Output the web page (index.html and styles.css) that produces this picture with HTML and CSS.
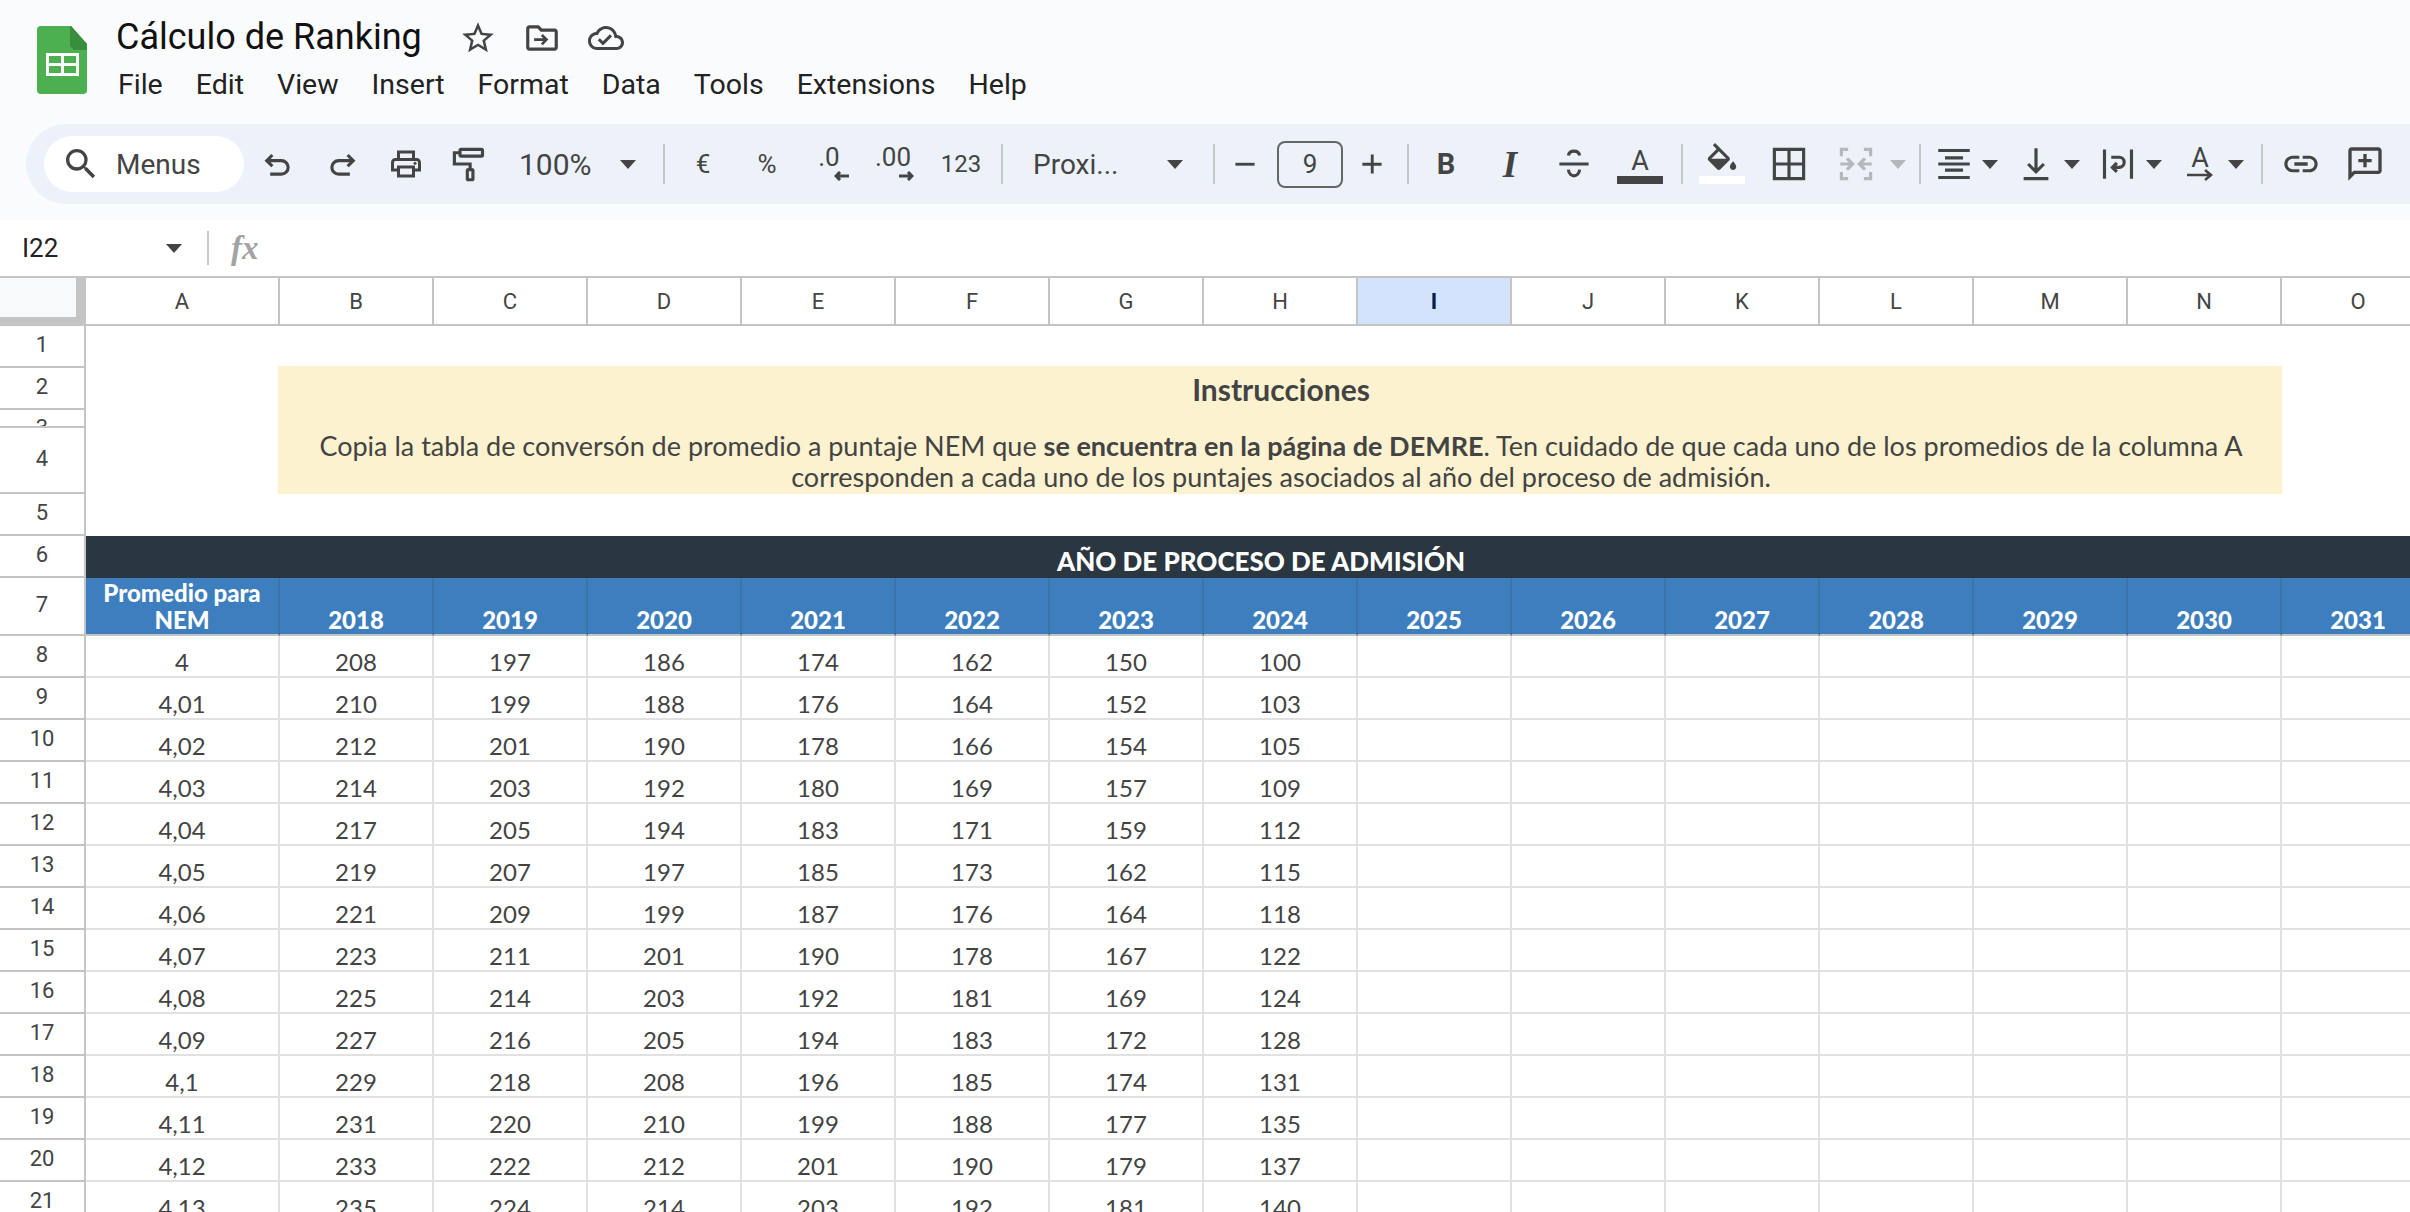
FILE: index.html
```html
<!DOCTYPE html>
<html lang="es">
<head>
  <meta charset="UTF-8">
  <title>Cálculo de Ranking</title>
  <link rel="stylesheet" href="styles.css">
</head>
<body>
  <div class="top">
    <div class="head">
      <svg class="logo" viewBox="0 0 50 68">
        <path fill="#4caf50" d="M4 0h30l16 18v46a4 4 0 0 1-4 4H4a4 4 0 0 1-4-4V4a4 4 0 0 1 4-4z"/>
        <path fill="#388e3c" d="M33 0h1l16 18v6H37l-4-4z"/>
        <path fill="#fff" fill-rule="evenodd" d="M9 27h33v23H9zm3 3v7h12v-7zm15 0v7h12v-7zm-15 10v7h12v-7zm15 0v7h12v-7z"/>
      </svg>
      <div class="head-text">
        <div class="title-row">
          <span class="doc-title">Cálculo de Ranking</span>
          <svg class="star-icon" viewBox="0 0 24 24"><path d="M22 9.24l-7.19-.62L12 2 9.19 8.63 2 9.24l5.46 4.73L5.82 21 12 17.27 18.18 21l-1.63-7.03L22 9.24zM12 15.4l-3.76 2.27 1-4.28-3.32-2.88 4.38-.38L12 6.1l1.71 4.04 4.38.38-3.32 2.88 1 4.28L12 15.4z"/></svg>
          <svg class="folder-icon" viewBox="0 0 24 24"><path d="M20 6h-8l-2-2H4c-1.1 0-2 .9-2 2v12c0 1.1.9 2 2 2h16c1.1 0 2-.9 2-2V8c0-1.1-.9-2-2-2zm0 12H4V6h5.17l2 2H20v10zM12.5 9.5l-1.2 1.2 1.5 1.5H7v1.7h5.8l-1.5 1.5 1.2 1.2L16 13z"/></svg>
          <svg class="cloud-icon" viewBox="0 0 24 24"><path d="M19.35 10.04C18.67 6.59 15.64 4 12 4 9.11 4 6.6 5.64 5.35 8.04 2.34 8.36 0 10.91 0 14c0 3.31 2.69 6 6 6h13c2.76 0 5-2.24 5-5 0-2.64-2.05-4.78-4.65-4.96zM19 18H6c-2.21 0-4-1.79-4-4 0-2.05 1.53-3.76 3.56-3.97l1.07-.11.5-.95C8.08 7.14 9.94 6 12 6c2.62 0 4.88 1.86 5.39 4.43l.3 1.5 1.53.11c1.56.1 2.78 1.41 2.78 2.96 0 1.65-1.35 3-3 3zm-9-3.82-2.09-2.09L6.5 13.5 10 17l6.01-6.01-1.41-1.41z"/></svg>
        </div>
        <div class="menu">
          <span>File</span><span>Edit</span><span>View</span><span>Insert</span><span>Format</span><span>Data</span><span>Tools</span><span>Extensions</span><span>Help</span>
        </div>
      </div>
    </div>

    <div class="toolbar">
      <div class="search-pill">
        <svg class="search-icon" viewBox="0 0 24 24"><path d="M15.5 14h-.79l-.28-.27A6.471 6.471 0 0 0 16 9.5 6.5 6.5 0 1 0 9.5 16c1.61 0 3.09-.59 4.23-1.57l.27.28v.79l5 4.99L20.49 19l-4.99-5zm-6 0C7.01 14 5 11.99 5 9.5S7.01 5 9.5 5 14 7.01 14 9.5 11.99 14 9.5 14z"/></svg>
        <span>Menus</span>
      </div>
      <div class="btn"><svg class="ico line" viewBox="0 0 32 32"><path d="M11 8 6 13l5 5M6 13h13a6 6 0 0 1 0 12H9"/></svg></div>
      <div class="btn"><svg class="ico line" viewBox="0 0 32 32"><path d="m21 8 5 5-5 5M26 13H13a6 6 0 0 0 0 12h10"/></svg></div>
      <div class="btn"><svg class="ico" viewBox="0 0 24 24"><path d="M19 8h-1V3H6v5H5c-1.66 0-3 1.34-3 3v6h4v4h12v-4h4v-6c0-1.66-1.34-3-3-3zM8 5h8v3H8V5zm8 14H8v-4h8v4zm2-4v-2H6v2H4v-4c0-.55.45-1 1-1h14c.55 0 1 .45 1 1v4h-2z"/><circle cx="18" cy="11.5" r="1"/></svg></div>
      <div class="btn btn-paint"><svg class="ico line" viewBox="0 0 32 32"><rect x="8" y="3" width="20" height="6" rx="1"/><path d="M8 6H3v10h14v5"/><rect x="14.500" y="21" width="5" height="9" rx="1"/></svg></div>
      <div class="zoom-select"><span>100%</span><i class="tri"></i></div>
      <div class="sep sep-a"></div>
      <div class="btn txt">€</div>
      <div class="btn txt">%</div>
      <div class="btn dec">
        <span class="dec-label">.0</span>
        <svg class="dec-arrow" viewBox="0 0 16 10"><path d="M15 5H3M6 1 2 5l4 4"/></svg>
      </div>
      <div class="btn dec">
        <span class="dec-label">.00</span>
        <svg class="dec-arrow" viewBox="0 0 16 10"><path d="M1 5h12M10 1l4 4-4 4"/></svg>
      </div>
      <div class="btn txt fmt-123">123</div>
      <div class="sep sep-b"></div>
      <div class="font-select"><span>Proxi...</span><i class="tri"></i></div>
      <div class="sep sep-c"></div>
      <div class="btn btn-minus"><svg class="ico-sm" viewBox="0 0 20 20"><path d="M2 9h16v2.400H2z"/></svg></div>
      <div class="size-box">9</div>
      <div class="btn btn-plus"><svg class="ico-sm" viewBox="0 0 20 20"><path d="M9 2h2.400v7H18v2.400h-6.600V18H9v-6.600H2V9h7z"/></svg></div>
      <div class="sep sep-d"></div>
      <div class="btn txt fmt-b">B</div>
      <div class="btn txt fmt-i">I</div>
      <div class="btn"><svg class="ico line" viewBox="0 0 32 32"><path d="M11 8.500c.5-3 3-4 5-4s4.500 1 5 4M3 16h26M11 21c.5 4 3 5.500 5 5.500s4.500-1.500 5-5.500"/></svg></div>
      <div class="btn color-btn btn-color">
        <span class="color-a">A</span>
        <span class="color-bar"></span>
      </div>
      <div class="sep sep-e"></div>
      <div class="btn color-btn">
        <svg class="fill-icon" viewBox="0 0 24 24"><path d="M16.560 8.940 7.620 0 6.210 1.410l2.380 2.380-5.150 5.150c-.59.59-.59 1.540 0 2.120l5.500 5.500c.29.29.68.44 1.060.44s.77-.15 1.060-.44l5.500-5.500c.59-.58.59-1.530 0-2.120zM5.210 10 10 5.210 14.790 10H5.210zM19 11.500s-2 2.170-2 3.500c0 1.100.9 2 2 2s2-.9 2-2c0-1.330-2-3.500-2-3.500z"/></svg>
        <span class="fill-bar"></span>
      </div>
      <div class="btn btn-borders"><svg class="ico line" viewBox="0 0 32 32"><path d="M3 3h26v26H3zM16 3v26M3 16h26"/></svg></div>
      <div class="btn btn-merge"><svg class="ico line muted" viewBox="0 0 32 32"><path d="M9 3H3v6M23 3h6v6M9 29H3v-6M23 29h6v-6M2 16h10M8 11l5 5-5 5M30 16H20M24 11l-5 5 5 5"/></svg></div>
      <i class="tri tri-merge"></i>
      <div class="sep sep-f"></div>
      <div class="split"><svg class="ico line" viewBox="0 0 32 32"><path d="M2 4h28M8 10.500h16M2 16h28M8 21.500h16M2 28h28"/></svg><i class="tri"></i></div>
      <div class="split"><svg class="ico line" viewBox="0 0 32 32"><path d="M5 29h22M16 2v21M9 16l7 7 7-7"/></svg><i class="tri"></i></div>
      <div class="split"><svg class="ico line" viewBox="0 0 32 32"><path d="M4 3v26M28 3v26M10 10h7a4 4 0 0 1 0 9h-5M15 15l-4 4 4 4"/></svg><i class="tri"></i></div>
      <div class="split">
        <div class="rotate-btn">
          <span class="rotate-a">A</span>
          <svg class="rotate-arrow" viewBox="0 0 26 12"><path d="M0 6h23M18 1l6 5-6 5"/></svg>
        </div>
        <i class="tri"></i>
      </div>
      <div class="sep sep-g"></div>
      <div class="btn"><svg class="ico ico-link" viewBox="0 0 24 24"><path d="M3.900 12c0-1.710 1.390-3.100 3.100-3.100h4V7H7c-2.760 0-5 2.240-5 5s2.240 5 5 5h4v-1.900H7c-1.710 0-3.100-1.390-3.100-3.100zM8 13h8v-2H8v2zm9-6h-4v1.900h4c1.710 0 3.100 1.390 3.100 3.100s-1.390 3.100-3.100 3.100h-4V17h4c2.760 0 5-2.240 5-5s-2.240-5-5-5z"/></svg></div>
      <div class="btn"><svg class="ico ico-link" viewBox="0 0 24 24"><path d="M20 2H4c-1.100 0-2 .9-2 2v18l4-4h14c1.100 0 2-.9 2-2V4c0-1.100-.9-2-2-2zm0 14H5.170L4 17.170V4h16v12z"/><path d="M11 6h2v3h3v2h-3v3h-2v-3H8V9h3z"/></svg></div>
    </div>
  </div>

  <div class="formula-bar">
    <div class="name-box"><span>I22</span><i class="tri"></i></div>
    <div class="fx-sep"></div>
    <span class="fx">fx</span>
  </div>

  <div class="sheet">
    <table class="grid">
      <colgroup>
        <col class="col-rh"><col class="col-a">
        <col><col><col><col><col><col><col><col><col><col><col><col><col><col>
      </colgroup>
      <tr class="col-head">
        <th class="corner"></th>
        <th>A</th><th>B</th><th>C</th><th>D</th><th>E</th><th>F</th><th>G</th><th>H</th>
        <th class="active">I</th>
        <th>J</th><th>K</th><th>L</th><th>M</th><th>N</th><th>O</th>
      </tr>
      <tr class="blank"><td class="rh">1</td><td colspan="15"></td></tr>
      <tr class="blank">
        <td class="rh">2</td><td rowspan="4"></td>
        <td class="note" colspan="13" rowspan="3">
          <div class="note-title">Instrucciones</div>
          <div class="note-body">Copia la tabla de conversón de promedio a puntaje NEM que <b>se encuentra en la página de DEMRE</b>. Ten cuidado de que cada uno de los promedios de la columna A corresponden a cada uno de los puntajes asociados al año del proceso de admisión.</div>
        </td>
        <td rowspan="4"></td>
      </tr>
      <tr class="short"><td class="rh"><div class="clip">3</div></td></tr>
      <tr class="tall"><td class="rh">4</td></tr>
      <tr class="blank"><td class="rh">5</td><td colspan="13"></td></tr>
      <tr class="blank"><td class="rh">6</td><td class="band" colspan="15">AÑO DE PROCESO DE ADMISIÓN</td></tr>
      <tr class="years">
        <td class="rh">7</td>
        <td>Promedio para NEM</td>
        <td>2018</td><td>2019</td><td>2020</td><td>2021</td><td>2022</td><td>2023</td><td>2024</td>
        <td>2025</td><td>2026</td><td>2027</td><td>2028</td><td>2029</td><td>2030</td><td>2031</td>
      </tr>
      <tr class="data"><td class="rh">8</td><td>4</td><td>208</td><td>197</td><td>186</td><td>174</td><td>162</td><td>150</td><td>100</td><td></td><td></td><td></td><td></td><td></td><td></td><td></td></tr>
      <tr class="data"><td class="rh">9</td><td>4,01</td><td>210</td><td>199</td><td>188</td><td>176</td><td>164</td><td>152</td><td>103</td><td></td><td></td><td></td><td></td><td></td><td></td><td></td></tr>
      <tr class="data"><td class="rh">10</td><td>4,02</td><td>212</td><td>201</td><td>190</td><td>178</td><td>166</td><td>154</td><td>105</td><td></td><td></td><td></td><td></td><td></td><td></td><td></td></tr>
      <tr class="data"><td class="rh">11</td><td>4,03</td><td>214</td><td>203</td><td>192</td><td>180</td><td>169</td><td>157</td><td>109</td><td></td><td></td><td></td><td></td><td></td><td></td><td></td></tr>
      <tr class="data"><td class="rh">12</td><td>4,04</td><td>217</td><td>205</td><td>194</td><td>183</td><td>171</td><td>159</td><td>112</td><td></td><td></td><td></td><td></td><td></td><td></td><td></td></tr>
      <tr class="data"><td class="rh">13</td><td>4,05</td><td>219</td><td>207</td><td>197</td><td>185</td><td>173</td><td>162</td><td>115</td><td></td><td></td><td></td><td></td><td></td><td></td><td></td></tr>
      <tr class="data"><td class="rh">14</td><td>4,06</td><td>221</td><td>209</td><td>199</td><td>187</td><td>176</td><td>164</td><td>118</td><td></td><td></td><td></td><td></td><td></td><td></td><td></td></tr>
      <tr class="data"><td class="rh">15</td><td>4,07</td><td>223</td><td>211</td><td>201</td><td>190</td><td>178</td><td>167</td><td>122</td><td></td><td></td><td></td><td></td><td></td><td></td><td></td></tr>
      <tr class="data"><td class="rh">16</td><td>4,08</td><td>225</td><td>214</td><td>203</td><td>192</td><td>181</td><td>169</td><td>124</td><td></td><td></td><td></td><td></td><td></td><td></td><td></td></tr>
      <tr class="data"><td class="rh">17</td><td>4,09</td><td>227</td><td>216</td><td>205</td><td>194</td><td>183</td><td>172</td><td>128</td><td></td><td></td><td></td><td></td><td></td><td></td><td></td></tr>
      <tr class="data"><td class="rh">18</td><td>4,1</td><td>229</td><td>218</td><td>208</td><td>196</td><td>185</td><td>174</td><td>131</td><td></td><td></td><td></td><td></td><td></td><td></td><td></td></tr>
      <tr class="data"><td class="rh">19</td><td>4,11</td><td>231</td><td>220</td><td>210</td><td>199</td><td>188</td><td>177</td><td>135</td><td></td><td></td><td></td><td></td><td></td><td></td><td></td></tr>
      <tr class="data"><td class="rh">20</td><td>4,12</td><td>233</td><td>222</td><td>212</td><td>201</td><td>190</td><td>179</td><td>137</td><td></td><td></td><td></td><td></td><td></td><td></td><td></td></tr>
      <tr class="data"><td class="rh">21</td><td>4,13</td><td>235</td><td>224</td><td>214</td><td>203</td><td>192</td><td>181</td><td>140</td><td></td><td></td><td></td><td></td><td></td><td></td><td></td></tr>
    </table>
  </div>
</body>
</html>
```

FILE: styles.css
```css
* {
  box-sizing: border-box;
  margin: 0;
  padding: 0;
}
html, body {
  height: 1212px;
  overflow: hidden;
}
body {
  font-family: Roboto, Arial, sans-serif;
  background-color: #fff;
  color: #444;
}

/* top area */
.top {
  height: 220px;
  background-color: #f9fbfd;
  padding-top: 16px;
}
.head {
  display: flex;
  height: 108px;
  padding-left: 37px;
}
.logo {
  width: 50px;
  height: 68px;
  margin-top: 10px;
}
.head-text {
  margin-left: 29px;
}
.title-row {
  display: flex;
  align-items: center;
  height: 40px;
}
.doc-title {
  font-size: 36px;
  color: #111;
  width: 306px;
  padding-top: 2px;
  white-space: nowrap;
}
.title-row svg {
  fill: #444;
  flex: none;
  margin-top: 4px;
}
.star-icon {
  width: 38px;
  height: 38px;
  margin-left: 37px;
}
.folder-icon {
  width: 38px;
  height: 38px;
  margin-left: 26px;
}
.cloud-icon {
  width: 36px;
  height: 36px;
  margin-left: 27px;
}
.menu {
  display: flex;
  gap: 33px;
  margin-top: 9px;
  padding-left: 2px;
  font-size: 28.5px;
  line-height: 40px;
  color: #222;
}

/* toolbar */
.toolbar {
  display: flex;
  align-items: center;
  height: 80px;
  margin-left: 26px;
  padding-left: 18px;
  background-color: #edf2fa;
  border-radius: 40px 0 0 40px;
}
.search-pill {
  display: flex;
  align-items: center;
  width: 200px;
  height: 56px;
  margin-right: 2px;
  padding-left: 17px;
  background-color: #fff;
  border-radius: 28px;
  font-size: 28px;
  color: #444;
}
.search-icon {
  width: 40px;
  height: 40px;
  fill: #444;
  margin-right: 15px;
}
.btn {
  flex: none;
  display: flex;
  align-items: center;
  justify-content: center;
  width: 64px;
  height: 56px;
}
.ico {
  width: 36px;
  height: 36px;
  fill: #444;
}
.ico.ico-link {
  width: 40px;
  height: 40px;
}
.ico.line {
  fill: none;
  stroke: #444;
  stroke-width: 2.8;
}
.ico.muted {
  stroke: #b4b7bb;
}
.ico-sm {
  width: 24px;
  height: 24px;
  fill: #444;
}
.txt {
  font-size: 26px;
  color: #444;
}
.tri {
  flex: none;
  display: block;
  width: 0;
  height: 0;
  border-left: 8px solid transparent;
  border-right: 8px solid transparent;
  border-top: 9px solid #444;
}
.sep {
  flex: none;
  width: 2px;
  height: 40px;
  background-color: #c7c7c7;
}
.btn-paint {
  width: 62px;
}
.zoom-select {
  flex: none;
  display: flex;
  align-items: center;
  width: 150px;
  padding-left: 19px;
  font-size: 30px;
}
.zoom-select span {
  width: 101px;
}
.sep-a { margin: 0 6px 0 13px; }
.sep-b { margin: 0 6px 0 8px; }
.sep-c { margin-left: 11px; }
.sep-d { margin: 0 5px 0 6px; }
.sep-e { margin: 0 7px 0 9px; }
.sep-f { margin: 0 5px 0 13px; }
.sep-g { margin: 0 6px 0 7px; }

.dec {
  flex-direction: column;
  align-items: center;
}
.dec-label {
  font-size: 26px;
  line-height: 24px;
  margin-top: -2px;
  margin-right: 4px;
}
.dec-arrow {
  width: 16px;
  height: 10px;
  margin-top: 2px;
  fill: none;
  stroke: #444;
  stroke-width: 3;
  margin-left: 22px;
}
.fmt-123 {
  font-size: 24px;
  margin-left: 2px;
}
.font-select {
  flex: none;
  display: flex;
  align-items: center;
  width: 193px;
  padding-left: 24px;
  font-size: 28px;
}
.font-select span {
  width: 134px;
}
.btn-minus {
  width: 60px;
}
.size-box {
  flex: none;
  width: 66px;
  height: 47px;
  margin-left: 2px;
  border: 2px solid #666;
  border-radius: 8px;
  font-size: 26px;
  line-height: 43px;
  text-align: center;
}
.btn-plus {
  width: 58px;
}
.fmt-b {
  font-weight: 700;
  font-size: 29px;
}
.fmt-i {
  font-family: "Liberation Serif", serif;
  font-style: italic;
  font-weight: 700;
  font-size: 37px;
}
.color-btn {
  flex-direction: column;
  justify-content: flex-end;
  height: 40px;
}
.btn-color {
  margin-left: 2px;
}
.color-a {
  font-size: 27px;
  line-height: 24px;
  margin-bottom: 3px;
}
.color-bar, .fill-bar {
  display: block;
  flex: none;
  width: 46px;
  height: 8px;
  background-color: #444;
}
.fill-bar {
  background-color: #fff;
}
.fill-icon {
  flex: none;
  width: 38px;
  height: 38px;
  fill: #444;
  margin-bottom: -5px;
}
.btn-borders {
  margin-left: 3px;
}
.btn-merge {
  margin-left: 3px;
}
.tri-merge {
  margin-left: 2px;
  border-top-color: #b4b7bb;
}
.split {
  flex: none;
  display: flex;
  align-items: center;
  width: 82px;
  height: 56px;
}
.split > svg, .split > .rotate-btn {
  flex: none;
  width: 56px;
}
.split > svg {
  padding: 0 10px;
}
.rotate-btn {
  display: flex;
  flex-direction: column;
  align-items: center;
}
.rotate-a {
  font-size: 27px;
  line-height: 22px;
}
.rotate-arrow {
  width: 26px;
  height: 12px;
  fill: none;
  stroke: #444;
  stroke-width: 2.6;
}

/* formula bar */
.formula-bar {
  display: flex;
  align-items: center;
  height: 56px;
}
.name-box {
  display: flex;
  align-items: center;
  width: 207px;
  padding-left: 22px;
  font-size: 26px;
  color: #222;
}
.name-box span {
  width: 144px;
}
.fx-sep {
  width: 2px;
  height: 34px;
  background-color: #c7c7c7;
}
.fx {
  margin-left: 22px;
  font-family: "Liberation Serif", serif;
  font-style: italic;
  font-weight: 700;
  font-size: 33px;
  line-height: 40px;
  color: #a3a3a3;
}

/* sheet */
.sheet {
  overflow: hidden;
  height: 936px;
}
.grid {
  width: 2436px;
  table-layout: fixed;
  border-collapse: separate;
  border-spacing: 0;
  font-family: Lato, "Open Sans", sans-serif;
  font-size: 24px;
  color: #434343;
}
.grid col {
  width: 154px;
}
.grid col.col-rh {
  width: 86px;
}
.grid col.col-a {
  width: 194px;
}
.grid td {
  text-align: center;
  overflow: hidden;
}
.col-head th {
  height: 50px;
  border-top: 2px solid #c4c4c4;
  border-bottom: 2px solid #c4c4c4;
  border-right: 2px solid #c4c4c4;
  font-family: Roboto, Arial, sans-serif;
  font-weight: 400;
  font-size: 22px;
  color: #444;
}
.col-head .corner {
  background-color: #f8f9fa;
  border-right: 10px solid #c4c4c4;
  border-bottom: 9px solid #c4c4c4;
}
.col-head .active {
  background-color: #d3e3fd;
  color: #041e49;
  font-weight: 700;
}
.grid .rh {
  border-right: 2px solid #c4c4c4;
  border-bottom: 2px solid #c4c4c4;
  padding-bottom: 4px;
  font-family: Roboto, Arial, sans-serif;
  font-size: 22px;
  color: #444;
}
.blank td {
  height: 42px;
}
.short td {
  height: 18px;
}
.tall td {
  height: 66px;
}
.grid .short .rh {
  padding: 0;
  vertical-align: top;
}
.clip {
  height: 16px;
  overflow: hidden;
  line-height: 36px;
}
.grid .note {
  background-color: #fdf2d0;
  box-shadow: -2px -2px 0 #fdf2d0, 0 -2px 0 #fdf2d0, -2px 0 0 #fdf2d0;
  padding: 0 30px 2px;
  vertical-align: bottom;
  font-size: 27px;
  line-height: 31px;
}
.note-title {
  margin-bottom: 25px;
  font-weight: 700;
  font-size: 30px;
}
.grid .band {
  background-color: #2a3640;
  color: #fff;
  font-weight: 900;
  font-size: 26px;
  vertical-align: bottom;
  padding-bottom: 1px;
}
.years td {
  height: 58px;
  background-color: #3d7ebe;
  color: #fff;
  font-weight: 900;
  font-size: 24px;
  line-height: 27px;
  vertical-align: bottom;
  padding-bottom: 1px;
  border-right: 2px solid #3a72ac;
  border-bottom: 2px solid #c4c4c4;
}
.years td:nth-child(2) {
  font-size: 24px;
  padding: 0 12px 1px;
}
.grid .years .rh {
  background-color: #fff;
  color: #444;
  font-weight: 400;
  font-size: 22px;
  vertical-align: middle;
  line-height: normal;
  border-right-color: #c4c4c4;
}
.data td {
  height: 42px;
  line-height: 28px;
  padding-top: 12px;
  white-space: nowrap;
  border-right: 2px solid #e1e1e1;
  border-bottom: 2px solid #e1e1e1;
}
.grid .data .rh {
  padding-top: 0;
  line-height: normal;
  border-right-color: #c4c4c4;
  border-bottom-color: #c4c4c4;
}
```
